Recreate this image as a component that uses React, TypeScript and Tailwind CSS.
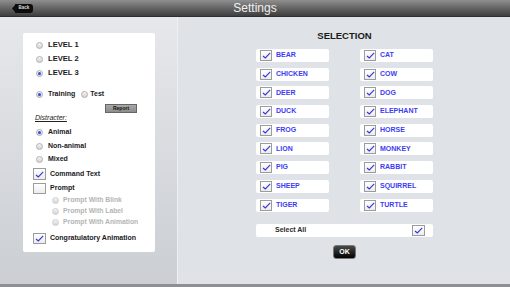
import React from 'react';

const animals = [
  ['BEAR', 'CAT'],
  ['CHICKEN', 'COW'],
  ['DEER', 'DOG'],
  ['DUCK', 'ELEPHANT'],
  ['FROG', 'HORSE'],
  ['LION', 'MONKEY'],
  ['PIG', 'RABBIT'],
  ['SHEEP', 'SQUIRREL'],
  ['TIGER', 'TURTLE'],
];

function Radio({ on = false, faded = false }: { on?: boolean; faded?: boolean }) {
  return (
    <div
      className={`w-[7px] h-[7px] rounded-full border flex items-center justify-center shrink-0 bg-gradient-to-b from-[#f4f4f4] to-[#d4d4d4] ${
        faded ? 'border-[#cfcfcf]' : 'border-[#b0b0b0]'
      }`}
    >
      {on && <div className="w-[3px] h-[3px] rounded-full bg-[#2a4ee6]" />}
    </div>
  );
}

function Check({ on = true, w = 12, h = 11 }: { on?: boolean; w?: number; h?: number }) {
  return (
    <div
      className="border border-[#9c9c9c] bg-gradient-to-b from-white to-[#ececec] flex items-center justify-center shrink-0"
      style={{ width: w, height: h }}
    >
      {on && (
        <svg width="9" height="7" viewBox="0 0 9 7">
          <path d="M1 4 L3.3 6 L8.2 0.8" fill="none" stroke="#3535d8" strokeWidth="1.1" />
        </svg>
      )}
    </div>
  );
}

export default function App() {
  const font = { fontFamily: '"Liberation Sans", Arial, sans-serif' };
  return (
    <div className="w-[510px] h-[287px] flex flex-col overflow-hidden bg-[#dfe2e6]" style={font}>
      {/* Header */}
      <div className="h-[17px] relative flex items-center justify-center bg-gradient-to-b from-[#8f8f8f] to-[#3e3e3e] border-b border-[#2e2e2e] shrink-0">
        <div className="absolute left-[12px] top-[4px] flex items-center">
          <svg width="4" height="9" viewBox="0 0 4 9" className="-mr-px">
            <path d="M4 0 L0 4.5 L4 9 Z" fill="#0d0d0d" />
          </svg>
          <div className="h-[9px] w-[18px] bg-[#0d0d0d] rounded-r-[3px] flex items-center justify-center text-[4.5px] font-bold text-[#dcdcdc]">
            Back
          </div>
        </div>
        <span className="text-[12px] leading-none text-[#f0f0f0]">Settings</span>
      </div>

      {/* Body */}
      <div className="flex-1 flex">
        {/* Left panel */}
        <div className="w-[178px] bg-gradient-to-b from-[#e6e8eb] to-[#cbced3] border-r border-[#eef0f2] pl-[23px] pt-[16px]">
          <div className="w-[132px] h-[219px] bg-white rounded-[2px] flex flex-col pt-[5px] text-[#1a1a1a] font-bold text-[7px]">
            {['LEVEL 1', 'LEVEL 2', 'LEVEL 3'].map((l, i) => (
              <div key={l} className="h-[14px] flex items-center pl-[13px] gap-[5px] text-[7.6px]">
                <Radio on={i === 2} />
                <span>{l}</span>
              </div>
            ))}
            <div className="h-[14px] mt-[7px] flex items-center pl-[13px] gap-[5px]">
              <Radio on />
              <span>Training</span>
              <div className="ml-[1px]">
                <Radio />
              </div>
              <span className="-ml-[3px]">Test</span>
            </div>
            <div className="h-[9px] mt-[3px] flex">
              <div className="ml-[82px] w-[32px] h-[9px] bg-gradient-to-b from-[#a8a8a8] to-[#8c8c8c] border border-[#666] flex items-center justify-center text-[5px] text-[#111]">
                Report
              </div>
            </div>
            <div className="h-[10px] flex items-center pl-[12px] italic font-normal underline text-[7px] text-[#222]">
              Distracter:
            </div>
            {['Animal', 'Non-animal', 'Mixed'].map((l, i) => (
              <div key={l} className={`${i === 0 ? 'mt-[2px]' : ''} ${i === 2 ? 'h-[13px]' : 'h-[14px]'} flex items-center pl-[13px] gap-[5px]`}>
                <Radio on={i === 0} />
                <span>{l}</span>
              </div>
            ))}
            <div className="h-[14px] mt-[1px] flex items-center pl-[10px] gap-[4px]">
              <Check w={13} h={12} />
              <span>Command Text</span>
            </div>
            <div className="h-[13px] mt-[1px] flex items-center pl-[10px] gap-[4px]">
              <Check on={false} w={13} h={11} />
              <span>Prompt</span>
            </div>
            {['Prompt With Blink', 'Prompt With Label', 'Prompt With Animation'].map((l) => (
              <div key={l} className="h-[11px] flex items-center pl-[29px] gap-[4px] text-[#b4b4b4] text-[6.8px]">
                <Radio faded />
                <span>{l}</span>
              </div>
            ))}
            <div className="h-[13px] mt-[4px] flex items-center pl-[10px] gap-[4px]">
              <Check w={13} h={11} />
              <span>Congratulatory Animation</span>
            </div>
          </div>
        </div>

        {/* Right panel */}
        <div className="flex-1 pl-[78px] pt-[13px]">
          <div className="w-[177px] flex flex-col items-center">
            <div className="h-[12px] flex items-center text-[9.5px] font-bold text-[#1a1a1a]">SELECTION</div>
            <div className="mt-[7px] w-full grid grid-cols-2 gap-x-[31px] gap-y-[5.7px]">
              {animals.flat().map((a) => (
                <div key={a} className="h-[13px] bg-white rounded-[2px] flex items-center pl-[4px] gap-[4px]">
                  <Check />
                  <span className="text-[7px] font-bold text-[#3d3df2]">{a}</span>
                </div>
              ))}
            </div>
            <div className="mt-[12.4px] w-full h-[13px] bg-white rounded-[2px] flex items-center justify-between pl-[19px] pr-[8px]">
              <span className="text-[7px] font-bold text-[#2a2a2a]">Select All</span>
              <Check w={13} h={11} />
            </div>
            <div className="mt-[8px] w-[23px] h-[14px] rounded-[3px] border border-[#777] bg-gradient-to-b from-[#4a4a4a] to-[#050505] flex items-center justify-center text-[7px] font-bold text-white">
              OK
            </div>
          </div>
        </div>
      </div>

      {/* Bottom strip */}
      <div className="h-[3px] bg-[#8d8f92] shrink-0" />
    </div>
  );
}
